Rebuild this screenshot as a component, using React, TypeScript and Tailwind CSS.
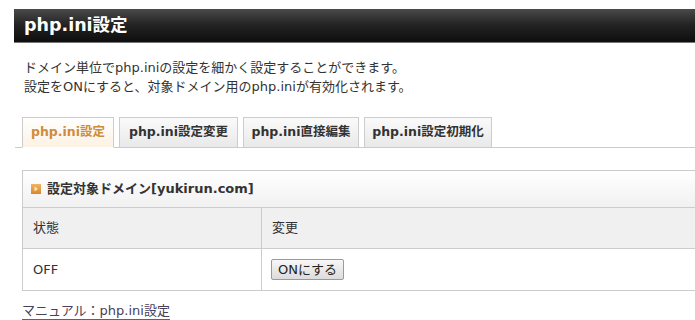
import React from "react";

const font = { fontFamily: '"DejaVu Sans", "Noto Sans CJK JP", sans-serif' };

const tabs = [
  { label: "php.ini設定", w: "w-[92px]", active: true },
  { label: "php.ini設定変更", w: "w-[119px]", active: false },
  { label: "php.ini直接編集", w: "w-[116px]", active: false },
  { label: "php.ini設定初期化", w: "w-[128px]", active: false },
];

function Bullet() {
  return (
    <svg width="10" height="10" viewBox="0 0 10 10" className="shrink-0">
      <defs>
        <linearGradient id="bg" x1="0" y1="0" x2="0" y2="1">
          <stop offset="0" stopColor="#f0b460" />
          <stop offset="1" stopColor="#d8872c" />
        </linearGradient>
      </defs>
      <rect x="0" y="0" width="10" height="10" fill="url(#bg)" />
      <path d="M3.5 2.5 L7 5 L3.5 7.5 Z" fill="#fbe3bd" />
    </svg>
  );
}

export default function App() {
  return (
    <div className="w-full h-[320px] overflow-hidden bg-white text-[#333]" style={font}>
      {/* Title bar */}
      <div className="mt-[9px] ml-[14px] h-[34px] flex items-center pl-[10px] bg-gradient-to-b from-[#4a4a4a] via-[#222] to-[#0e0e0e] border-b border-[#777]">
        <h1 className="text-white font-bold text-[17.5px] leading-none">php.ini設定</h1>
      </div>

      {/* Description */}
      <div className="mt-[15px] pl-[24px] text-[13px] leading-[19px]">
        <p>ドメイン単位でphp.iniの設定を細かく設定することができます。</p>
        <p>設定をONにすると、対象ドメイン用のphp.iniが有効化されます。</p>
      </div>

      {/* Tabs */}
      <div className="mt-[21px] ml-[15px] flex items-end gap-[5px] pl-[7px] border-b border-[#ccc] h-[31px]">
        {tabs.map((t) => (
          <div
            key={t.label}
            className={`${t.w} h-[31px] -mb-px flex items-center justify-center border border-[#ccc] text-[12.5px] font-bold ${
              t.active
                ? "border-b-white bg-gradient-to-b from-white to-[#fdf2e3] text-[#cf8c3c]"
                : "bg-gradient-to-b from-[#fafafa] to-[#e9e9e9] text-[#333]"
            }`}
          >
            {t.label}
          </div>
        ))}
      </div>

      {/* Domain box */}
      <div className="mt-[22px] ml-[22px] border-l border-t border-b border-[#ccc]">
        <div className="h-[37px] flex items-center gap-[6px] pl-[8px] bg-gradient-to-b from-white to-[#f1f1f1] border-b border-[#ccc]">
          <Bullet />
          <span className="text-[13px] font-bold">設定対象ドメイン[yukirun.com]</span>
        </div>
        <div className="flex h-[41px] bg-[#f0f0f0] border-b border-[#ccc] text-[13px]">
          <div className="w-[239px] border-r border-[#ccc] flex items-center pl-[10px]">状態</div>
          <div className="flex-1 flex items-center pl-[10px]">変更</div>
        </div>
        <div className="flex h-[41px] text-[13px]">
          <div className="w-[239px] border-r border-[#ccc] flex items-center pl-[10px]">OFF</div>
          <div className="flex-1 flex items-center pl-[9px]">
            <button className="h-[21px] px-[6px] border border-[#9a9a9a] rounded-[2px] bg-gradient-to-b from-[#f7f7f7] to-[#dcdcdc] text-[13px] leading-none text-[#222]">
              ONにする
            </button>
          </div>
        </div>
      </div>

      {/* Manual link */}
      <div className="mt-[11px] ml-[22px] leading-none">
        <a href="#" className="inline-block text-[13px] leading-[16px] text-[#4a405a] border-b border-[#6a5a7a]">
          マニュアル：php.ini設定
        </a>
      </div>
    </div>
  );
}
